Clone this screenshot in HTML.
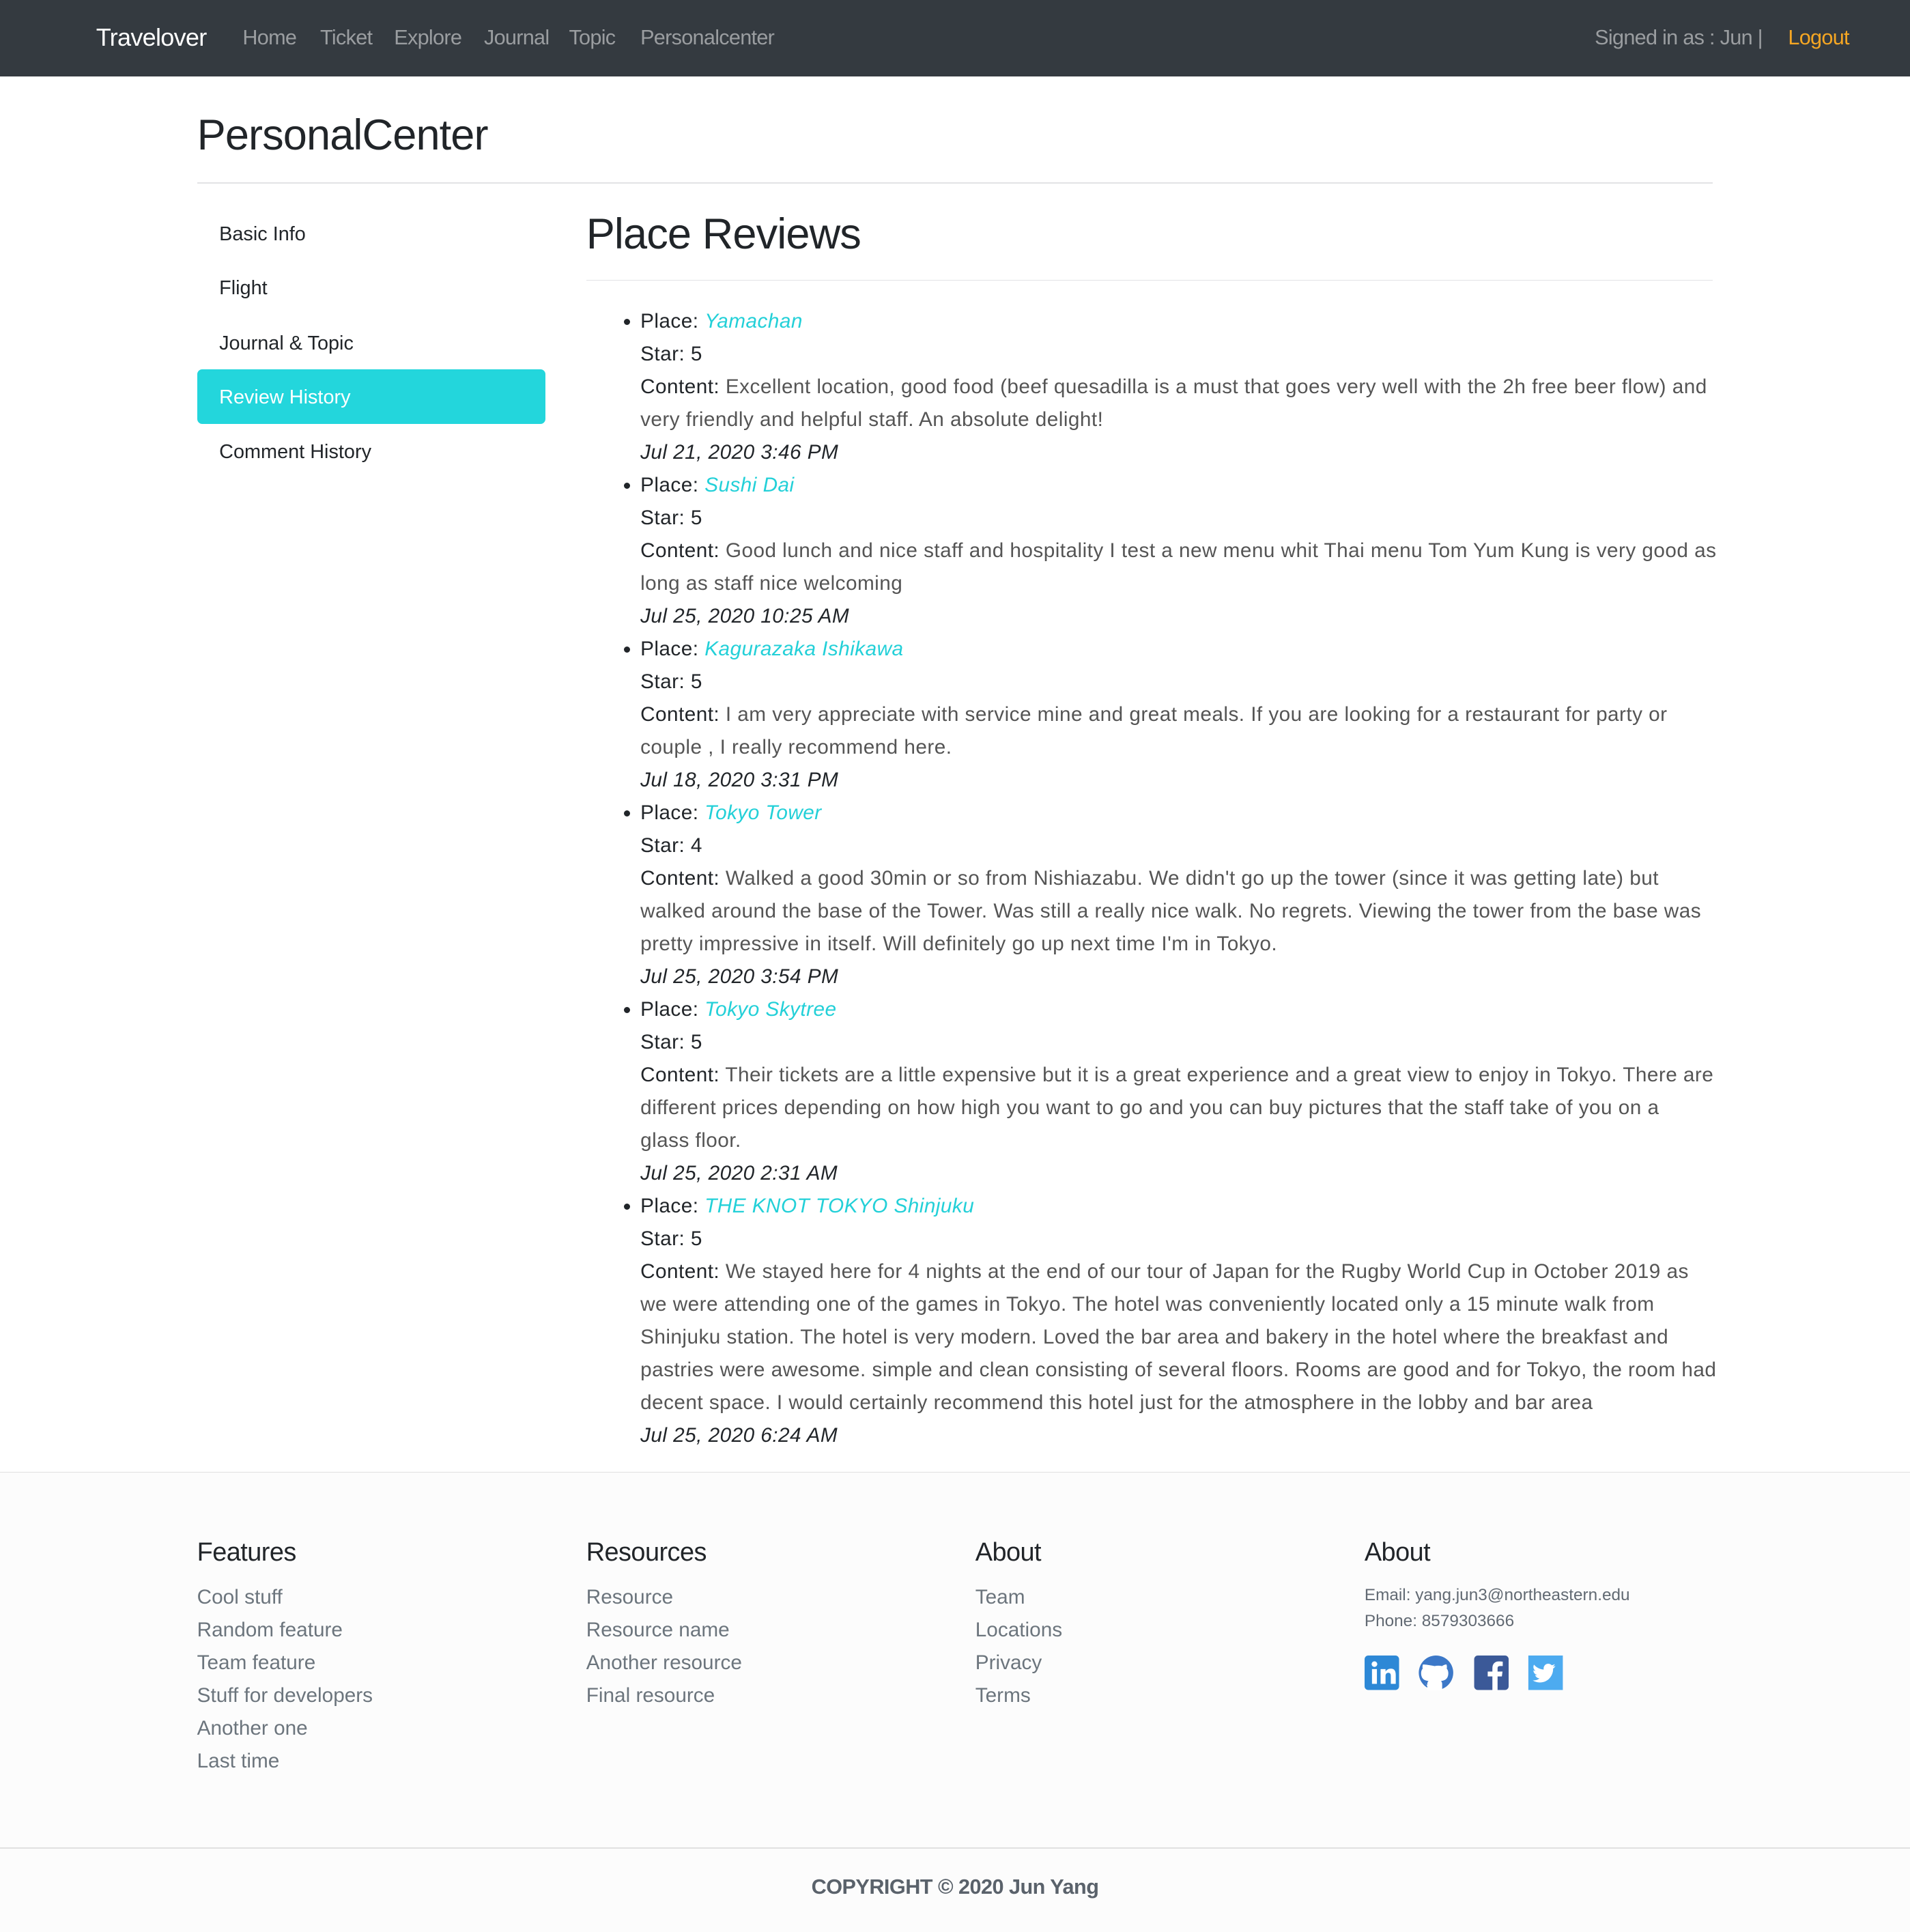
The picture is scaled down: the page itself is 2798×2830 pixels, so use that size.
<!DOCTYPE html>
<html><head><meta charset="utf-8"><style>
html{zoom:1.804}
body{margin:0;width:1551px;height:1567px;font-family:"Liberation Sans",sans-serif;color:#212529;background:#fff;position:relative;overflow:hidden}
.nav{position:absolute;top:0;left:0;width:1551px;height:62px;background:#343a40}
.nav span{position:absolute;top:21px;font-size:17px;color:#9a9da0;letter-spacing:-0.4px;white-space:nowrap}
.a{position:absolute;white-space:nowrap}
.hr{position:absolute;height:1px;background:#e2e3e5}
.side{position:absolute;left:178px;font-size:16px;color:#212529}
ul{position:absolute;left:476px;top:248px;margin:0;padding:0 0 0 44px;list-style:disc;font-size:16.5px;line-height:26.6px;letter-spacing:0.25px;width:900px}
li{white-space:nowrap}
.c{color:#555}
.l{color:#23d0d8;font-style:italic}
i.d{font-style:italic;color:#212529}
.foot{position:absolute;left:0;top:1195px;width:1551px;height:373px;background:#fcfcfc;border-top:1px solid #e0e0e0}
.fh{position:absolute;top:1249px;font-size:21px;letter-spacing:-0.3px}
.fl{position:absolute;top:1284px;font-size:16.5px;line-height:26.6px;color:#6c757d}
</style></head><body>
<div class="nav">
<span style="left:78px;top:19px;font-size:20px;color:#fff">Travelover</span>
<span style="left:197px">Home</span><span style="left:260px">Ticket</span><span style="left:320px">Explore</span><span style="left:393px">Journal</span><span style="left:462px">Topic</span><span style="left:520px">Personalcenter</span>
<span style="left:1295px">Signed in as : Jun |</span><span style="left:1452px;color:#f5a623">Logout</span>
</div>
<div class="a" style="left:160px;top:90px;font-size:35px;letter-spacing:-0.5px">PersonalCenter</div>
<div class="hr" style="left:160px;top:148px;width:1231px"></div>
<div class="side" style="top:181px">Basic Info</div>
<div class="side" style="top:225px">Flight</div>
<div class="side" style="top:270px">Journal &amp; Topic</div>
<div class="a" style="left:160px;top:300px;width:283px;height:44px;background:#23d6dc;border-radius:4px"></div>
<div class="side" style="top:314px;color:#fff">Review History</div>
<div class="side" style="top:358px">Comment History</div>
<div class="a" style="left:476px;top:170px;font-size:35px;letter-spacing:-0.5px">Place Reviews</div>
<div class="hr" style="left:476px;top:227px;width:915px"></div>
<ul>
<li>Place: <span class="l">Yamachan</span><br>Star: 5<br>Content: <span class="c">Excellent location, good food (beef quesadilla is a must that goes very well with the 2h free beer flow) and<br>very friendly and helpful staff. An absolute delight!</span><br><i class="d">Jul 21, 2020 3:46 PM</i></li>
<li>Place: <span class="l">Sushi Dai</span><br>Star: 5<br>Content: <span class="c">Good lunch and nice staff and hospitality I test a new menu whit Thai menu Tom Yum Kung is very good as<br>long as staff nice welcoming</span><br><i class="d">Jul 25, 2020 10:25 AM</i></li>
<li>Place: <span class="l">Kagurazaka Ishikawa</span><br>Star: 5<br>Content: <span class="c">I am very appreciate with service mine and great meals. If you are looking for a restaurant for party or<br>couple , I really recommend here.</span><br><i class="d">Jul 18, 2020 3:31 PM</i></li>
<li>Place: <span class="l">Tokyo Tower</span><br>Star: 4<br>Content: <span class="c">Walked a good 30min or so from Nishiazabu. We didn't go up the tower (since it was getting late) but<br>walked around the base of the Tower. Was still a really nice walk. No regrets. Viewing the tower from the base was<br>pretty impressive in itself. Will definitely go up next time I'm in Tokyo.</span><br><i class="d">Jul 25, 2020 3:54 PM</i></li>
<li>Place: <span class="l">Tokyo Skytree</span><br>Star: 5<br>Content: <span class="c">Their tickets are a little expensive but it is a great experience and a great view to enjoy in Tokyo. There are<br>different prices depending on how high you want to go and you can buy pictures that the staff take of you on a<br>glass floor.</span><br><i class="d">Jul 25, 2020 2:31 AM</i></li>
<li>Place: <span class="l">THE KNOT TOKYO Shinjuku</span><br>Star: 5<br>Content: <span class="c">We stayed here for 4 nights at the end of our tour of Japan for the Rugby World Cup in October 2019 as<br>we were attending one of the games in Tokyo. The hotel was conveniently located only a 15 minute walk from<br>Shinjuku station. The hotel is very modern. Loved the bar area and bakery in the hotel where the breakfast and<br>pastries were awesome. simple and clean consisting of several floors. Rooms are good and for Tokyo, the room had<br>decent space. I would certainly recommend this hotel just for the atmosphere in the lobby and bar area</span><br><i class="d">Jul 25, 2020 6:24 AM</i></li>
</ul>
<div class="foot"></div>
<div class="fh" style="left:160px">Features</div>
<div class="fh" style="left:476px">Resources</div>
<div class="fh" style="left:792px">About</div>
<div class="fh" style="left:1108px">About</div>
<div class="fl" style="left:160px">Cool stuff<br>Random feature<br>Team feature<br>Stuff for developers<br>Another one<br>Last time</div>
<div class="fl" style="left:476px">Resource<br>Resource name<br>Another resource<br>Final resource</div>
<div class="fl" style="left:792px">Team<br>Locations<br>Privacy<br>Terms</div>
<div class="a" style="left:1108px;top:1285px;font-size:13.5px;line-height:21px;color:#626a73">Email: yang.jun3@northeastern.edu<br>Phone: 8579303666</div>
<svg class="a" style="left:1108px;top:1344px" width="165" height="30" viewBox="0 0 165 30">
<rect x="0" y="0" width="28" height="28" rx="3" fill="#2d88d6"/>
<rect x="6" y="11" width="4" height="12" fill="#fff"/><circle cx="8" cy="7" r="2.3" fill="#fff"/>
<path d="M13 11h4v2c1-1.5 2.5-2.3 4.3-2.3 3 0 4 2 4 5V23h-4v-6.5c0-1.5-.5-2.5-2-2.5s-2.3 1-2.3 2.5V23h-4z" fill="#fff"/>
<circle cx="58" cy="14" r="14" fill="#3c78c8"/>
<path d="M53 28v-4c-2 .5-3.5-.5-4-2M63 28v-5c0-1-.5-2-1-2.3 3-.4 6-1.5 6-6.5 0-1.5-.5-2.7-1.3-3.6.2-.7.3-2-.2-3.3 0 0-1.2-.3-3.6 1.3a12 12 0 0 0-6 0C48.5 7 47.4 7.3 47.4 7.3c-.5 1.3-.4 2.6-.2 3.3-.8.9-1.3 2.1-1.3 3.6 0 5 3 6.1 6 6.5-.5.5-1 1.3-1 2.3v5" fill="#fff"/>
<rect x="89" y="0" width="28" height="28" rx="3" fill="#3b5998"/>
<path d="M108 28V17h3.5l.5-4h-4v-2.5c0-1.2.4-2 2-2h2.2V5c-.4 0-1.7-.2-3.2-.2-3.2 0-5.2 2-5.2 5.5V13H100v4h3.8v11z" fill="#fff"/>
<rect x="133" y="0" width="28" height="28" fill="#4dabf0"/>
<path d="M155 8.5c-.7.3-1.4.5-2.2.6.8-.5 1.4-1.2 1.7-2.1-.8.4-1.6.8-2.5.9a3.8 3.8 0 0 0-6.5 3.5c-3.2-.2-6-1.7-7.900-4-.3.6-.5 1.2-.5 1.9 0 1.3.7 2.5 1.7 3.2-.6 0-1.2-.2-1.7-.5 0 1.9 1.3 3.4 3.1 3.8-.6.2-1.2.2-1.7.1.5 1.5 1.9 2.6 3.6 2.7a7.7 7.7 0 0 1-5.6 1.6c1.7 1.1 3.7 1.7 5.8 1.7 7 0 10.8-5.8 10.8-10.8v-.5c.8-.5 1.4-1.2 1.9-2z" fill="#fff"/>
</svg>
<div class="hr" style="left:0;top:1500px;width:1551px;background:#e0e0e0"></div>
<div class="a" style="left:0;width:1551px;text-align:center;top:1523px;font-size:17px;color:#5a626b;font-weight:bold;letter-spacing:-0.3px">COPYRIGHT © 2020 Jun Yang</div>
</body></html>
